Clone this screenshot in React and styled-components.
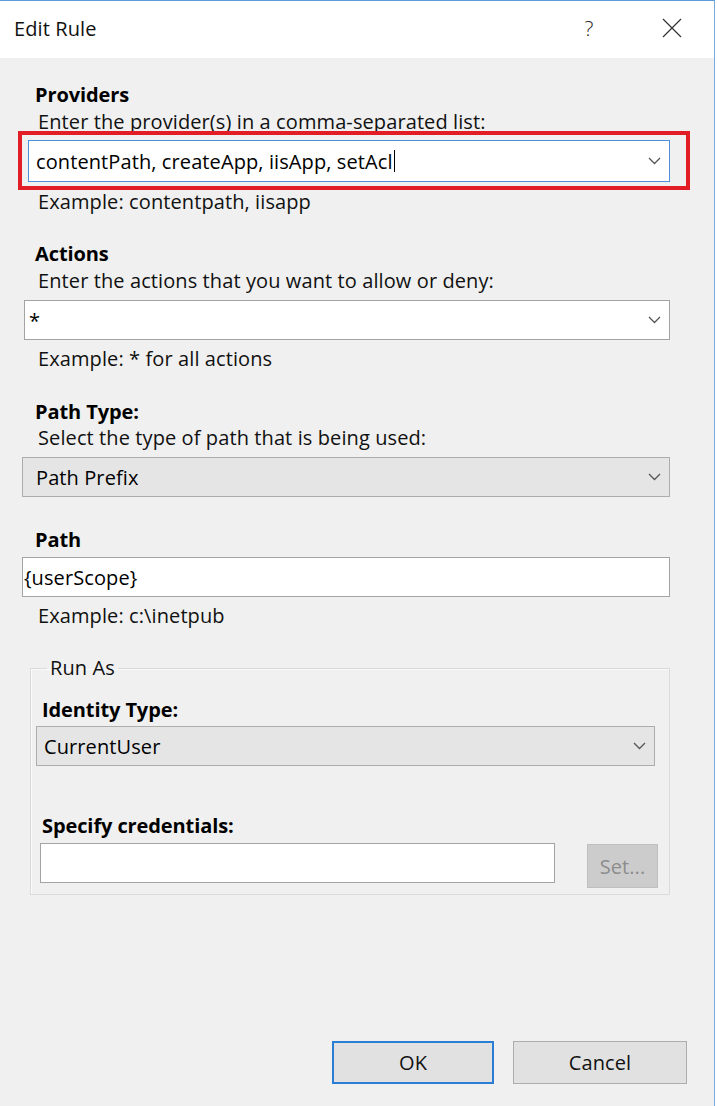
import React from 'react';
import styled, { createGlobalStyle } from 'styled-components';

const FONT = `"Segoe UI", "Open Sans", "Noto Sans", sans-serif`;

const GlobalStyle = createGlobalStyle`
    html, body {
        margin: 0;
        padding: 0;
        background: #ffffff;
    }
    body {
        font-family: ${FONT};
        color: #000;
    }
`;

/**
 * Window frame
 */

const Window = styled.div`
    width: 715px;
    height: 1106px;
    box-sizing: border-box;
    border-top: 1px solid #5d9ad6;
    border-right: 1px solid #7aa9db;
    display: flex;
    flex-direction: column;
    background-color: #f0f0f0;
    font-size: 20px;
    letter-spacing: 0.1px;
`;

const TitleBar = styled.header`
    height: 57px;
    flex: none;
    display: flex;
    align-items: center;
    padding-left: 14px;
    background-color: #ffffff;
`;

const Title = styled.span`
    font-size: 20px;
    color: #111;
    margin-top: -2px;
`;

const TitleButtons = styled.div`
    margin-left: auto;
    display: flex;
    align-items: center;
    gap: 34px;
    padding-right: 13px;
`;

const TitleButton = styled.span`
    width: ${p => p.w}px;
    height: 40px;
    display: flex;
    align-items: center;
    justify-content: center;
    color: #222;
    font-size: 21px;
    font-weight: 300;
    margin-top: -4px;
`;

const Content = styled.main`
    flex: 1;
    display: flex;
    flex-direction: column;
    padding: 25px 44px 0 22px;
`;

/**
 * Text
 */

const Label = styled.div`
    font-weight: bold;
    line-height: 24px;
    margin-left: ${p => p.inset || 13}px;
    margin-top: ${p => p.top || 0}px;
    letter-spacing: -0.1px;
`;

const Hint = styled.div`
    line-height: 24px;
    margin-left: ${p => p.inset || 16}px;
    margin-top: ${p => p.top || 0}px;
    color: #111;
`;

/**
 * Boxes
 */

const Box = styled.div`
    position: relative;
    height: ${p => p.h || 40}px;
    box-sizing: border-box;
    margin-top: ${p => p.top || 0}px;
    margin-left: ${p => p.inset || 0}px;
    padding-left: ${p => p.pad || 6}px;
    display: flex;
    align-items: center;
    background-color: ${p => (p.gray ? '#e5e5e5' : '#ffffff')};
    border: 1px solid ${p => (p.focus ? '#4f8fd6' : p.gray ? '#adadad' : '#a3a3a3')};
    white-space: nowrap;
`;

const CredInput = styled(Box)`
    flex: none;
    width: 515px;
`;

const Highlight = styled.div`
    position: relative;
    margin-top: 6px;
    margin-left: 6px;

    &::after {
        content: '';
        position: absolute;
        top: -9px;
        left: -10px;
        right: -20px;
        bottom: -8px;
        border: 4px solid #e31d25;
        pointer-events: none;
    }
`;

const Caret = styled.span`
    display: inline-block;
    width: 1px;
    height: 22px;
    background-color: #000;
    vertical-align: middle;
    margin-left: 1px;
`;

const ChevronWrap = styled.span`
    position: absolute;
    right: 8px;
    top: 50%;
    transform: translateY(-50%);
    display: flex;
`;

const Chevron = () => (
    <ChevronWrap>
        <svg width="13" height="8" viewBox="0 0 13 8">
            <path d="M1 1 L6.5 6.5 L12 1" fill="none" stroke="#555" strokeWidth="1.3" />
        </svg>
    </ChevronWrap>
);

/**
 * Run As group
 */

const Group = styled.fieldset`
    margin: 28px 0 0 8px;
    padding: 18px 14px 6px 5px;
    border: 1px solid #dadada;
    box-shadow: inset 1px 1px 0 #fafafa;
    min-width: 0;
`;

const Legend = styled.legend`
    padding: 0 3px;
    margin-left: 11px;
    line-height: 24px;
    color: #111;
`;

const CredRow = styled.div`
    display: flex;
    align-items: flex-start;
    margin-top: 5px;
`;

const SetButton = styled.div`
    flex: none;
    width: 71px;
    height: 44px;
    box-sizing: border-box;
    margin: 1px 0 0 32px;
    background-color: #cccccc;
    border: 1px solid #bfbfbf;
    color: #8d8d8d;
    display: flex;
    align-items: center;
    justify-content: center;
`;

/**
 * Footer
 */

const Footer = styled.footer`
    display: flex;
    justify-content: flex-end;
    gap: 19px;
    padding: 0 27px 22px 0;
`;

const Button = styled.div`
    width: ${p => p.w}px;
    height: 43px;
    box-sizing: border-box;
    display: flex;
    align-items: center;
    justify-content: center;
    background-color: #e1e1e1;
    border: ${p => (p.primary ? '2px solid #2a7fd4' : '1px solid #adadad')};
    color: #111;
`;

export default function App() {
    return (
        <>
            <GlobalStyle />
            <Window>
                <TitleBar>
                    <Title>Edit Rule</Title>
                    <TitleButtons>
                        <TitleButton w={40}>?</TitleButton>
                        <TitleButton w={58}>
                            <svg width="20" height="20" viewBox="0 0 20 20">
                                <path d="M1 1 L19 19 M19 1 L1 19" stroke="#333" strokeWidth="1.2" />
                            </svg>
                        </TitleButton>
                    </TitleButtons>
                </TitleBar>

                <Content>
                    <Label>Providers</Label>
                    <Hint top={3}>Enter the provider(s) in a comma-separated list:</Hint>
                    <Highlight>
                        <Box h={42} focus pad={7}>
                            contentPath, createApp, iisApp, setAcl<Caret />
                            <Chevron />
                        </Box>
                    </Highlight>
                    <Hint top={8}>Example: contentpath, iisapp</Hint>

                    <Label top={28}>Actions</Label>
                    <Hint top={3}>Enter the actions that you want to allow or deny:</Hint>
                    <Box top={7} inset={2} pad={4}>
                        *
                        <Chevron />
                    </Box>
                    <Hint top={7}>Example: * for all actions</Hint>

                    <Label top={29}>Path Type:</Label>
                    <Hint top={2}>Select the type of path that is being used:</Hint>
                    <Box top={7} gray pad={13}>
                        Path Prefix
                        <Chevron />
                    </Box>

                    <Label top={31}>Path</Label>
                    <Box top={5} pad={1}>{'{userScope}'}</Box>
                    <Hint top={7}>Example: c:\inetpub</Hint>

                    <Group>
                        <Legend>Run As</Legend>
                        <Label inset={6}>Identity Type:</Label>
                        <Box top={4} gray pad={7}>
                            CurrentUser
                            <Chevron />
                        </Box>
                        <Label inset={6} top={48}>Specify credentials:</Label>
                        <CredRow>
                            <CredInput inset={4} />
                            <SetButton>Set...</SetButton>
                        </CredRow>
                    </Group>
                </Content>

                <Footer>
                    <Button w={162} primary>OK</Button>
                    <Button w={174}>Cancel</Button>
                </Footer>
            </Window>
        </>
    );
}
